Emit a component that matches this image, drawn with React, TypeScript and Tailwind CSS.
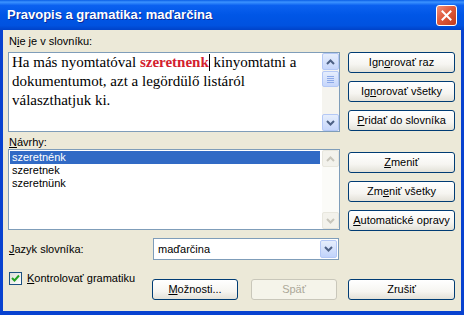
import React from "react"

const Chevron: React.FC<{ up?: boolean; color: string }> = ({ up, color }) => (
    <svg width="9" height="6" viewBox="0 0 9 6">
        <polyline
            points={up ? "1,5 4.5,1.5 8,5" : "1,1 4.5,4.5 8,1"}
            fill="none"
            stroke={color}
            strokeWidth="2"
        />
    </svg>
)

const ScrollBar: React.FC<{ disabled?: boolean }> = ({ disabled }) => {
    const btn = disabled
        ? "h-[17px] rounded-[2px] border border-[#e8e7de] bg-[#f3f2ec] flex items-center justify-center"
        : "h-[17px] rounded-[2px] border border-[#b4c8f6] bg-[linear-gradient(to_bottom,#e6eefc,#c6d6fb)] flex items-center justify-center"
    const arrow = disabled ? "#c8c6bc" : "#4d6185"
    return (
        <div className={"w-[17px] h-full flex flex-col " + (disabled ? "bg-[#fbfbf8]" : "bg-[#f5f4ef]")}>
            <div className={btn}>
                <Chevron up color={arrow} />
            </div>
            {!disabled && (
                <div className="h-[16px] mt-px rounded-[2px] border border-[#b4c8f6] bg-[linear-gradient(to_bottom,#e6eefc,#c6d6fb)] flex flex-col items-center justify-center gap-px">
                    <div className="w-[7px] h-px bg-[#8da9e8]" />
                    <div className="w-[7px] h-px bg-[#8da9e8]" />
                    <div className="w-[7px] h-px bg-[#8da9e8]" />
                    <div className="w-[7px] h-px bg-[#8da9e8]" />
                </div>
            )}
            <div className="flex-1" />
            <div className={btn}>
                <Chevron color={arrow} />
            </div>
        </div>
    )
}

const Button: React.FC<{ className: string; disabled?: boolean; children: React.ReactNode }> = ({ className, disabled, children }) => (
    <div
        className={
            "h-[21px] rounded-[3px] border flex items-center justify-center leading-none " +
            (disabled
                ? "border-[#c9c7ba] bg-[#f5f4ea] text-[#aca899] "
                : "border-[#003c74] bg-[linear-gradient(to_bottom,#ffffff_0%,#f6f5f1_60%,#e3e1d8_100%)] text-black ") +
            className
        }
    >
        {children}
    </div>
)

const U: React.FC<{ children: React.ReactNode }> = ({ children }) => <span className="underline underline-offset-1">{children}</span>

export default function App() {
    return (
        <div className="w-[464px] h-[315px] flex flex-col bg-[#0842d0] font-['Liberation_Sans',Arial,sans-serif]">
            {/* title bar */}
            <div className="h-[30px] flex items-center pl-[7px] pr-[7px] bg-[linear-gradient(to_bottom,#0a5ee6_0%,#3c93ff_7%,#0b61f0_18%,#0056e6_50%,#0052e0_85%,#0042c8_100%)]">
                <span className="text-white font-bold text-[13px] text-shadow-[1px_1px_0_#0b2b9a]">Pravopis a gramatika: maďarčina</span>
                <div className="ml-auto w-[21px] h-[21px] rounded-[3px] border border-white bg-[linear-gradient(135deg,#f0907a_0%,#e05a3c_45%,#c23c1c_100%)] flex items-center justify-center">
                    <svg width="11" height="11" viewBox="0 0 11 11">
                        <path d="M1.5 1.5 L9.5 9.5 M9.5 1.5 L1.5 9.5" stroke="white" strokeWidth="2" strokeLinecap="square" />
                    </svg>
                </div>
            </div>

            {/* body */}
            <div className="flex-1 mx-[3px] mb-[4px] bg-[#ece9d8] px-[5px] flex flex-col text-[11px] text-black">
                <div className="mt-[5px] h-[13px] leading-[13px] pl-px">
                    N<U>i</U>e je v slovníku:
                </div>

                <div className="mt-[4px] flex gap-[8px]">
                    <div className="w-[332px] h-[80px] border border-[#7f9db9] bg-white flex">
                        <div className="flex-1 pl-[3px] font-['Liberation_Serif','Times_New_Roman',serif] text-[15px] leading-[19px]">
                            Ha más nyomtatóval <span className="font-bold text-[#d3202e]">szeretnenk</span>
                            <span className="inline-block w-px h-[17px] bg-black align-[-4px]" /> kinyomtatni a<br />
                            dokumentumot, azt a legördülő listáról<br />
                            választhatjuk ki.
                        </div>
                        <ScrollBar />
                    </div>
                    <div className="w-[107px] flex flex-col gap-[8px]">
                        <Button className="">Ign<U>o</U>rovať raz</Button>
                        <Button className="">Ig<U>n</U>orovať všetky</Button>
                        <Button className=""><U>P</U>ridať do slovníka</Button>
                    </div>
                </div>

                <div className="mt-[4px] flex gap-[8px]">
                    <div className="w-[332px] flex flex-col">
                        <div className="h-[13px] leading-[13px] pl-px">
                            <U>N</U>ávrhy:
                        </div>
                        <div className="h-[81px] border border-[#7f9db9] bg-white flex">
                            <div className="flex-1 p-px pr-[2px]">
                                <div className="h-[13px] leading-[13px] pl-[2px] bg-[#316ac5] text-white">szeretnénk</div>
                                <div className="h-[13px] leading-[13px] pl-[2px]">szeretnek</div>
                                <div className="h-[13px] leading-[13px] pl-[2px]">szeretnünk</div>
                            </div>
                            <ScrollBar disabled />
                        </div>
                    </div>
                    <div className="w-[107px] pt-[16px] flex flex-col gap-[8px]">
                        <Button className=""><U>Z</U>meniť</Button>
                        <Button className="">Zm<U>e</U>niť všetky</Button>
                        <Button className=""><U>A</U>utomatické opravy</Button>
                    </div>
                </div>

                <div className="mt-[7px] h-[22px] flex items-center">
                    <div className="w-[145px] pl-px">
                        <U>J</U>azyk slovníka:
                    </div>
                    <div className="w-[186px] h-[22px] border border-[#7f9db9] bg-white flex items-center p-px">
                        <div className="flex-1 pl-[3px]">maďarčina</div>
                        <div className="w-[17px] h-full rounded-[2px] border border-[#b4c8f6] bg-[linear-gradient(to_bottom,#e6eefc,#c1d3fb)] flex items-center justify-center">
                            <Chevron color="#4d6185" />
                        </div>
                    </div>
                </div>

                <div className="flex items-start">
                    <div className="w-[144px] pt-[10px] pl-px flex items-center gap-[5px]">
                        <div className="w-[13px] h-[13px] border border-[#1c5180] bg-[linear-gradient(135deg,#dcdcd7,#ffffff)] flex items-center justify-center">
                            <svg width="9" height="9" viewBox="0 0 9 9">
                                <polyline points="1,4 3.5,6.5 8,1.5" fill="none" stroke="#21a121" strokeWidth="2" />
                            </svg>
                        </div>
                        <span>
                            <U>K</U>ontrolovať gramatiku
                        </span>
                    </div>
                    <div className="mt-[19px] flex">
                        <Button className="w-[86px]"><U>M</U>ožnosti...</Button>
                        <Button className="w-[86px] ml-[13px]" disabled>Späť</Button>
                        <Button className="w-[107px] ml-[11px]">Zrušiť</Button>
                    </div>
                </div>
            </div>
        </div>
    )
}
